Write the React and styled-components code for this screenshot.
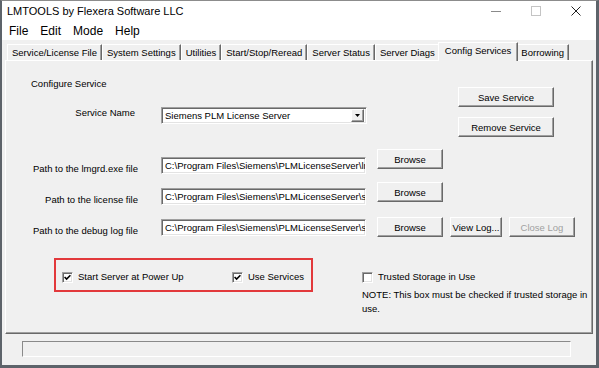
import React from "react";
import styled, { createGlobalStyle } from "styled-components";

// LMTOOLS - Config Services tab

const GlobalStyle = createGlobalStyle`
  body {
    margin: 0;
    overflow: hidden;
    background: #fff;
  }
`;

const Window = styled.div`
  width: 599px;
  height: 368px;
  box-sizing: border-box;
  display: flex;
  flex-direction: column;
  background: #f0f0f0;
  border-top: 1px solid #8c8c8c;
  border-left: 2px solid #5d636a;
  border-right: 3px solid #5d636a;
  border-bottom: 3px solid #5d636a;
  font-family: "Liberation Sans", Arial, sans-serif;
  color: #000;
`;

const TitleBar = styled.div`
  height: 20px;
  display: flex;
  align-items: center;
  justify-content: space-between;
  background: #fff;
  padding-left: 5px;
  font-size: 11px;
`;

const Controls = styled.div`
  display: flex;
  height: 100%;
`;

const ControlButton = styled.div`
  width: 40px;
  height: 100%;
  display: flex;
  align-items: center;
  justify-content: center;
`;

const MenuBar = styled.div`
  height: 19px;
  display: flex;
  align-items: center;
  background: #fff;
  padding-left: 1px;
  font-size: 12px;
`;

const MenuItem = styled.span`
  padding: 0 6px;
`;

const TabStrip = styled.div`
  height: 19px;
  margin-top: 2px;
  margin-bottom: -1px;
  padding-left: 5px;
  display: flex;
  align-items: flex-start;
  font-size: 9.5px;
`;

const Tab = styled.div`
  box-sizing: border-box;
  height: ${p => (p.$active ? "19px" : "16px")};
  margin: ${p => (p.$active ? "0 -2px" : "2px 0 0")};
  padding: ${p => (p.$active ? "1px 6px 0" : "1px 4px 0")};
  line-height: 14px;
  white-space: nowrap;
  background: #f0f0f0;
  border-top: 1px solid #fff;
  border-left: 1px solid #fff;
  border-right: 1px solid #696969;
  box-shadow: inset -1px 0 #a0a0a0;
  position: ${p => (p.$active ? "relative" : "static")};
  z-index: ${p => (p.$active ? 1 : "auto")};
`;

const Panel = styled.div`
  box-sizing: border-box;
  height: 274px;
  margin: 0 3px;
  border-top: 1px solid #fff;
  border-left: 1px solid #fff;
  border-right: 1px solid #696969;
  border-bottom: 1px solid #696969;
  box-shadow: inset -1px -1px #a0a0a0;
  padding-top: 17px;
  display: flex;
  flex-direction: column;
  font-size: 9.5px;
`;

const TopArea = styled.div`
  display: flex;
  align-items: flex-start;
`;

const LeftCol = styled.div`
  width: 452px;
  display: flex;
  flex-direction: column;
`;

const SectionTitle = styled.div`
  margin-left: 25px;
  line-height: 12px;
`;

const FieldRow = styled.div`
  display: flex;
  align-items: flex-start;
  margin-top: ${p => p.$top || 0}px;
`;

const Label = styled.div`
  width: ${p => p.$width}px;
  margin-right: ${p => p.$gap}px;
  margin-top: ${p => p.$drop || 0}px;
  text-align: right;
  line-height: 12px;
  white-space: nowrap;
`;

const Sunken = styled.div`
  box-sizing: border-box;
  height: 17px;
  background: #fff;
  border: 1px solid;
  border-color: #a0a0a0 #fff #fff #a0a0a0;
  box-shadow: inset 1px 1px #696969, inset -1px -1px #e3e3e3;
`;

const Combo = styled(Sunken)`
  width: 206px;
  display: flex;
  align-items: center;
  padding: 0 2px 0 3px;
`;

const ComboText = styled.span`
  flex: 1;
  white-space: nowrap;
`;

const DropButton = styled.div`
  box-sizing: border-box;
  width: 13px;
  height: 13px;
  background: #f0f0f0;
  border: 1px solid;
  border-color: #fff #696969 #696969 #fff;
  box-shadow: inset -1px -1px #a0a0a0;
  display: flex;
  align-items: center;
  justify-content: center;
`;

const Field = styled(Sunken)`
  width: 205px;
  padding: 0 3px;
  overflow: hidden;
  white-space: nowrap;
  line-height: 15px;
`;

const ButtonStack = styled.div`
  margin-top: 9px;
  display: flex;
  flex-direction: column;
  gap: 10px;
`;

const Button = styled.div`
  box-sizing: border-box;
  width: ${p => p.$width}px;
  height: 20px;
  display: flex;
  align-items: center;
  justify-content: center;
  white-space: nowrap;
  color: ${p => (p.$disabled ? "#a0a0a0" : "#000")};
  background: #f0f0f0;
  border: 1px solid;
  border-color: #fff #696969 #696969 #fff;
  box-shadow: inset -1px -1px #a0a0a0;
`;

const PathList = styled.div`
  margin-top: 20px;
  display: flex;
  flex-direction: column;
  gap: 13px;
`;

const Actions = styled.div`
  display: flex;
  gap: 7px;
  margin-left: 11px;
  margin-top: -${p => p.$lift}px;
`;

const BottomArea = styled.div`
  margin-top: 21px;
  display: flex;
  align-items: flex-start;
`;

const Highlight = styled.div`
  box-sizing: border-box;
  width: 259px;
  height: 34px;
  margin-left: 48px;
  padding: 4px 0 0 6px;
  border: 2px solid #e2383b;
  display: grid;
  grid-template-columns: 170px auto;
  align-items: center;
`;

const CheckItem = styled.label`
  display: flex;
  align-items: center;
  gap: 5px;
  line-height: 14px;
  white-space: nowrap;
`;

const Box = styled.span`
  box-sizing: border-box;
  width: 11px;
  height: 11px;
  background: #fff;
  border: 1px solid;
  border-color: #a0a0a0 #fff #fff #a0a0a0;
  box-shadow: inset 1px 1px #696969, inset -1px -1px #e3e3e3;
  display: flex;
  align-items: center;
  justify-content: center;
`;

const TrustedCol = styled.div`
  margin-left: 49px;
  margin-top: 12px;
  display: flex;
  flex-direction: column;
  gap: 4px;
`;

const Note = styled.div`
  width: 230px;
  line-height: 14px;
`;

const StatusBar = styled.div`
  box-sizing: border-box;
  width: 549px;
  height: 16px;
  margin: 7px 0 0 20px;
  border: 1px solid;
  border-color: #8a8a8a #fff #fff #8a8a8a;
`;

function CheckBox({ checked, children }) {
  return (
    <CheckItem>
      <Box>
        {checked && (
          <svg width="7" height="7" viewBox="0 0 7 7">
            <path d="M0.6 3 L2.6 5 L6.4 1.2" fill="none" stroke="#000" strokeWidth="1.6" />
          </svg>
        )}
      </Box>
      {children}
    </CheckItem>
  );
}

const tabs = [
  "Service/License File",
  "System Settings",
  "Utilities",
  "Start/Stop/Reread",
  "Server Status",
  "Server Diags",
  "Config Services",
  "Borrowing",
];

const paths = [
  { label: "Path to the lmgrd.exe file", value: "C:\\Program Files\\Siemens\\PLMLicenseServer\\lmgrd.exe", lift: 8 },
  { label: "Path to the license file", value: "C:\\Program Files\\Siemens\\PLMLicenseServer\\splm8.lic", lift: 6 },
  { label: "Path to the debug log file", value: "C:\\Program Files\\Siemens\\PLMLicenseServer\\splm8.log", lift: 2, log: true },
];

export default function App() {
  return (
    <>
      <GlobalStyle />
      <Window>
        <TitleBar>
          <span>LMTOOLS by Flexera Software LLC</span>
          <Controls>
            <ControlButton>
              <svg width="10" height="10" viewBox="0 0 10 10">
                <path d="M0 5.5 H10" stroke="#8a8a8a" strokeWidth="1" />
              </svg>
            </ControlButton>
            <ControlButton>
              <svg width="10" height="10" viewBox="0 0 10 10">
                <rect x="0.5" y="0.5" width="9" height="9" fill="none" stroke="#c4c4c4" strokeWidth="1" />
              </svg>
            </ControlButton>
            <ControlButton>
              <svg width="10" height="10" viewBox="0 0 10 10">
                <path d="M0.5 0.5 L9.5 9.5 M9.5 0.5 L0.5 9.5" stroke="#222" strokeWidth="1" />
              </svg>
            </ControlButton>
          </Controls>
        </TitleBar>

        <MenuBar>
          <MenuItem>File</MenuItem>
          <MenuItem>Edit</MenuItem>
          <MenuItem>Mode</MenuItem>
          <MenuItem>Help</MenuItem>
        </MenuBar>

        <TabStrip>
          {tabs.map(t => (
            <Tab key={t} $active={t === "Config Services"}>{t}</Tab>
          ))}
        </TabStrip>

        <Panel>
          <TopArea>
            <LeftCol>
              <SectionTitle>Configure Service</SectionTitle>
              <FieldRow $top={17}>
                <Label $width={129} $gap={26}>Service Name</Label>
                <Combo>
                  <ComboText>Siemens PLM License Server</ComboText>
                  <DropButton>
                    <svg width="5" height="3" viewBox="0 0 5 3">
                      <path d="M0 0 H5 L2.5 3 Z" fill="#000" />
                    </svg>
                  </DropButton>
                </Combo>
              </FieldRow>
            </LeftCol>
            <ButtonStack>
              <Button $width={96}>Save Service</Button>
              <Button $width={96}>Remove Service</Button>
            </ButtonStack>
          </TopArea>

          <PathList>
            {paths.map(p => (
              <FieldRow key={p.label}>
                <Label $width={132} $gap={23} $drop={6}>{p.label}</Label>
                <Field>{p.value}</Field>
                <Actions $lift={p.lift}>
                  <Button $width={66}>Browse</Button>
                  {p.log && <Button $width={52}>View Log...</Button>}
                  {p.log && <Button $width={66} $disabled>Close Log</Button>}
                </Actions>
              </FieldRow>
            ))}
          </PathList>

          <BottomArea>
            <Highlight>
              <CheckBox checked>Start Server at Power Up</CheckBox>
              <CheckBox checked>Use Services</CheckBox>
            </Highlight>
            <TrustedCol>
              <CheckBox>Trusted Storage in Use</CheckBox>
              <Note>NOTE: This box must be checked if trusted storage in use.</Note>
            </TrustedCol>
          </BottomArea>
        </Panel>

        <StatusBar />
      </Window>
    </>
  );
}
